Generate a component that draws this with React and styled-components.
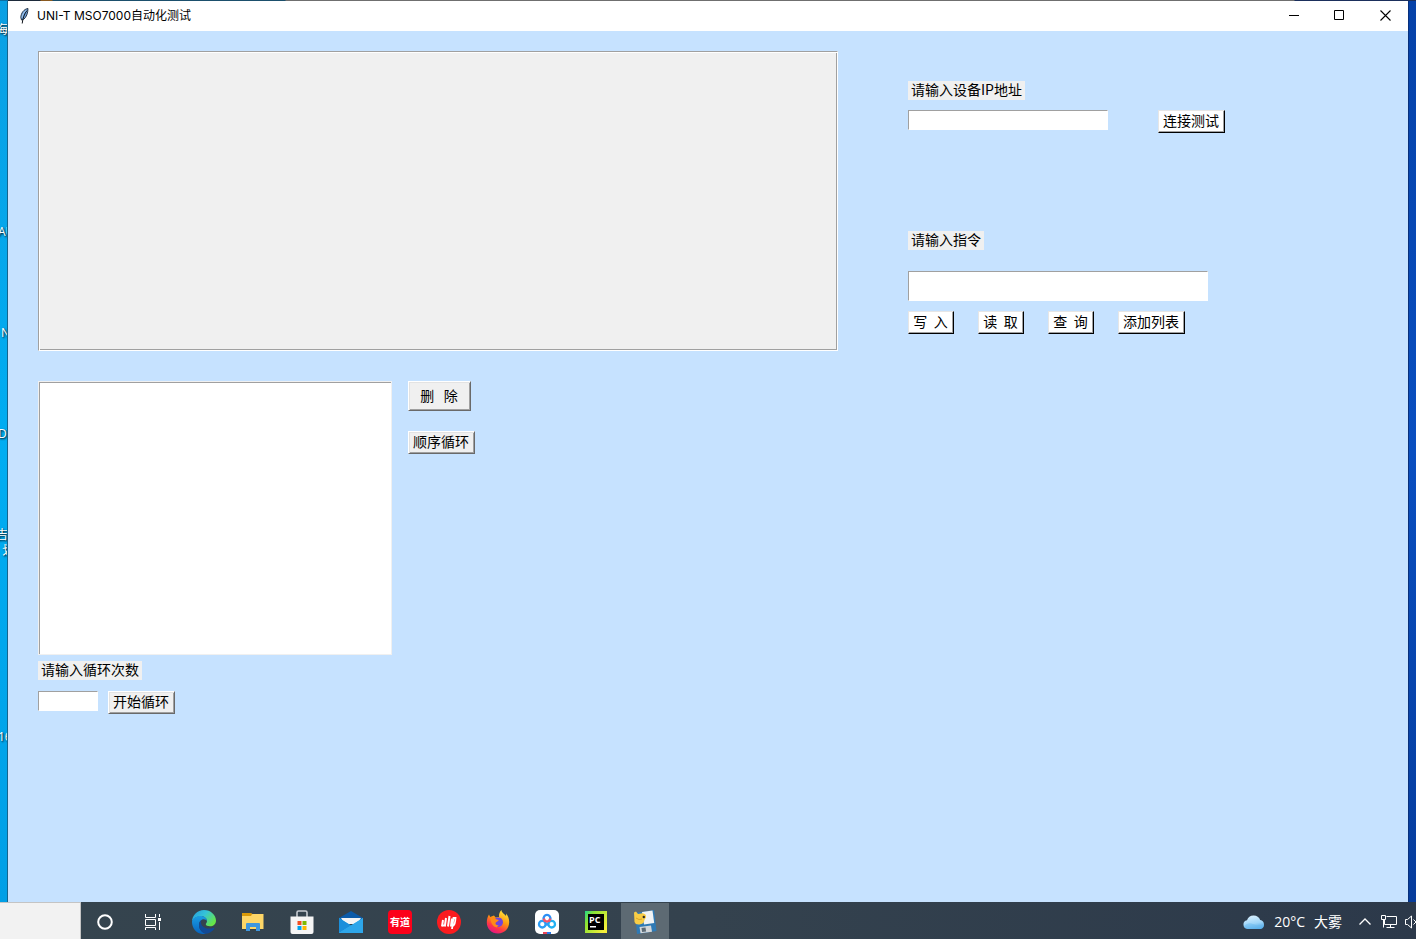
import React from "react";
import styled, { createGlobalStyle, css } from "styled-components";

const GlobalStyle = createGlobalStyle`
  *, *::before, *::after { box-sizing: border-box; }
  body {
    margin: 0;
    font-family: "Noto Sans CJK SC", "Noto Sans", sans-serif;
    font-size: 14px;
    color: #000;
  }
  button, input, select { font: inherit; color: inherit; margin: 0; border-radius: 0; }
  svg { display: block; flex: none; }
`;

/* ---------- desktop ---------- */

const Desktop = styled.div`
  min-height: 100vh;
  display: flex;
  flex-direction: column;
  overflow: hidden;
  background: linear-gradient(90deg, #00a2ea 50%, #0642a8 50%);
`;

const TopEdge = styled.div`
  height: 1px;
  background: linear-gradient(90deg, #0a6fa4 8px, #1d2a3a 8px, #1d2a3a 40px, #8a5a20 41px, #8a5a20 52px, #1b4f6c 53px, #1b4f6c 285px, #6f6f6f 286px, #6f6f6f 1294px, #1b2f5c 1295px);
`;

const Workspace = styled.div`
  flex: 1;
  display: flex;
`;

const IconColumn = styled.ul`
  flex: none;
  width: 8px;
  margin: 0;
  padding: 21px 0 0;
  list-style: none;
  overflow: hidden;
  border-right: 1px solid #17658c;
  background: linear-gradient(#0aa0e4, #00adf2 50%, #009fe6);
`;

const labelStarts = { cut: -4, edge: -2, inset: 1 };

const IconLabel = styled.li`
  height: 101px;
  margin-left: ${(p) => labelStarts[p.$start || "cut"]}px;
  font-family: "Open Sans", "Noto Sans CJK SC", sans-serif;
  font-size: 12px;
  line-height: 16px;
  color: #fff;
  white-space: pre;
  text-shadow: 1px 1px 2px #000;
`;

const RightEdge = styled.div`
  flex: none;
  width: 8px;
  border-left: 1px solid #08307c;
  background: linear-gradient(#0642a8, #0a4fc0 50%, #063c9c);
`;

/* ---------- application window ---------- */

const AppWindow = styled.main`
  flex: 1;
  min-width: 0;
  display: flex;
  flex-direction: column;
  background: #c6e2ff;
`;

const TitleBar = styled.header`
  display: flex;
  align-items: center;
  height: 30px;
  padding-left: 10px;
  background: #fff;
`;

const Title = styled.h1`
  flex: 1;
  margin: 0 0 0 6px;
  font-family: Inter, "Noto Sans CJK SC", sans-serif;
  font-size: 12px;
  font-weight: 400;
  line-height: 16px;
`;

const CaptionButton = styled.button`
  width: 46px;
  height: 30px;
  padding: 0 0 1px;
  border: 0;
  background: transparent;
  display: grid;
  place-items: center;
`;

const Client = styled.div`
  flex: 1;
  display: grid;
  grid-template-columns: minmax(0, 8fr) minmax(0, 5fr);
  column-gap: 70px;
  align-items: start;
  padding: 20px 0 20px 30px;
`;

const Column = styled.div`
  display: flex;
  flex-direction: column;
  align-items: flex-start;
`;

const OutputPanel = styled.output`
  width: 100%;
  height: 300px;
  margin-bottom: 30px;
  border: 1px solid;
  border-color: #a0a0a0 #fff #fff #a0a0a0;
  box-shadow: inset 1px 1px #fff, inset -1px -1px #a0a0a0;
  background: #f0f0f0;
`;

const Row = styled.div`
  display: flex;
  align-items: flex-start;
  gap: ${(p) => p.$gap}px;
`;

const CommandList = styled.select`
  appearance: none;
  width: 354px;
  height: 274px;
  padding: 2px;
  border: 1px solid #f0f0f0;
  box-shadow: inset 1px 1px #a0a0a0;
  background: #fff;
  overflow: hidden;
  outline: 0;
`;

const Stack = styled.div`
  display: flex;
  flex-direction: column;
  align-items: flex-start;
  gap: 20px;
`;

const raisedGrey = css`
  border-color: #fff #696969 #696969 #fff;
  box-shadow: inset 1px 1px #e3e3e3, inset -1px -1px #a0a0a0;
  background: #f0f0f0;
`;

const raisedWhite = css`
  border-color: #e6e6e6 #000 #000 #e6e6e6;
  box-shadow: inset -1px -1px #a0a0a0;
  background: #fff;
`;

const widths = { short: 46, medium: 63, long: 67 };

const PushButton = styled.button`
  width: ${(p) => widths[p.$size || "long"]}px;
  height: ${(p) => (p.$size === "medium" ? 30 : 23)}px;
  padding: 0 1px 3px 0;
  border: 1px solid;
  line-height: 18px;
  white-space: pre;
  ${(p) => (p.$white ? raisedWhite : raisedGrey)}
`;

const FieldLabel = styled.label`
  padding: 0 3px 2px;
  line-height: 17px;
  background: #f0f0f0;
`;

const Entry = styled.input`
  width: ${(p) => p.$width}px;
  height: ${(p) => (p.$tall ? 30 : 20)}px;
  padding: 0 3px;
  border: 1px solid;
  border-color: #a0a0a0 #fff #fff #a0a0a0;
  background: #fff;
  outline: 0;
`;

const LoopGroup = styled.section`
  display: flex;
  flex-direction: column;
  align-items: flex-start;
  gap: 11px;
  margin-top: 6px;
`;

const AddressGroup = styled(LoopGroup)`
  gap: 10px;
  margin-top: 30px;
`;

const CommandGroup = styled(LoopGroup)`
  gap: 10px;
  margin-top: 98px;

  ${FieldLabel} { margin-bottom: 11px; }
`;

/* ---------- taskbar ---------- */

const Taskbar = styled.footer`
  display: flex;
  height: 37px;
  padding-top: 1px;
  background: linear-gradient(90deg, #35444e, #34424e 50%, #2c394a);
`;

const SearchBox = styled.input`
  flex: none;
  width: 81px;
  height: 37px;
  margin: -1px 1px 0 0;
  border: 0;
  border-top: 1px solid #c4c4c4;
  border-right: 1px solid #c4c4c4;
  background: #f2f2f2;
`;

const AppStrip = styled.nav`
  display: flex;
  gap: 1px;
`;

const TaskButton = styled.button`
  width: 48px;
  height: 36px;
  padding: 2px 0 0;
  border: 0;
  display: grid;
  place-items: center;
  background: ${(p) => (p.$active ? "#5d6a73" : "transparent")};
`;

const Tray = styled.div`
  flex: none;
  display: flex;
  align-items: center;
  margin-left: auto;
  padding-top: 2px;
  overflow: hidden;
  color: #fff;
`;

const Weather = styled.button`
  display: flex;
  align-items: center;
  gap: 9px;
  padding: 0;
  margin-right: 17px;
  border: 0;
  background: transparent;
  font-family: "Open Sans", "Noto Sans CJK SC", sans-serif;
  font-size: 14px;
  line-height: 20px;
  color: #fff;
`;

const TrayButton = styled.button`
  padding: 0;
  margin-right: ${(p) => p.$after || 0}px;
  border: 0;
  background: transparent;
  overflow: hidden;
`;

/* ---------- drawings ---------- */

const Feather = () => (
  <svg width="13" height="18" viewBox="0 0 13 18">
    <path d="M10 1.500 C6 2 3 6 2.800 10.500 L3.500 13 L5.500 12.500 C8.300 10.500 10 6 10 1.500Z" fill="#6d9fd8" stroke="#1a2738" strokeWidth=".9" />
    <path d="M9 3.500 C6.500 6.500 4.800 11 4.200 16.500" fill="none" stroke="#10151c" strokeWidth="1" />
    <path d="M8 3.400 C5.800 5.400 4.500 7.500 4 10.500" fill="none" stroke="#b8d7f5" strokeWidth=".8" />
  </svg>
);

const Cortana = () => (
  <svg width="24" height="24" viewBox="0 0 24 24">
    <circle cx="11" cy="12" r="6.8" fill="none" stroke="#fff" strokeWidth="2" />
  </svg>
);

const TaskView = () => (
  <svg width="24" height="24" viewBox="0 0 24 24" fill="none" stroke="#fff" strokeWidth="1">
    <path d="M2.500 4v3.500h10V4M2.500 20v-2.500h10V20M2.500 9.500h10v6h-10zM16.500 4v3M16.500 12v8" />
    <path d="M15 8h3v3h-3z" fill="#fff" stroke="none" />
  </svg>
);

const Edge = () => (
  <svg width="24" height="24" viewBox="0 0 24 24">
    <defs>
      <linearGradient id="edgeTop" x1="0" y1="0" x2="1" y2=".6">
        <stop offset="0" stopColor="#2499dc" /><stop offset=".5" stopColor="#35c3d8" /><stop offset="1" stopColor="#67e647" />
      </linearGradient>
      <linearGradient id="edgeSide" x1="0" y1="0" x2="0" y2="1">
        <stop offset="0" stopColor="#1b9de2" /><stop offset="1" stopColor="#0763bf" />
      </linearGradient>
    </defs>
    <path d="M0 12C0 5 5.400 0 12 0s12 5 12 10.500c0 3.700-2.700 5.800-6 5.800-2.600 0-4.200-1-4.200-2 0-.7 1.200-1.300 1.200-3.200C15 8.300 12.500 6.200 9 6.200 4.500 6.200 0 9 0 12Z" fill="url(#edgeTop)" />
    <path d="M0 12c0-3.500 4.200-6 8.500-6 3.700 0 6.500 2.200 6.500 5-.6-1.100-1.800-1.800-3.200-1.800-2.800 0-4.800 2.500-4.800 5.700 0 4.600 3.300 7.600 7 8.900C6 25.500 0 19 0 12Z" fill="url(#edgeSide)" />
    <path d="M9.600 10C8 11 7 12.900 7 14.900c0 4.600 3.300 8 7 8.900 3.600-.6 6.500-2.600 8.400-5.400.3-.5-.1-.9-.6-.7C15.500 20.300 9 17 9 12.500c0-1 .2-1.800.6-2.500Z" fill="#124a96" />
  </svg>
);

const Explorer = () => (
  <svg width="24" height="24" viewBox="0 0 24 24">
    <path d="M1 3h9l1.500 1H22v15H1z" fill="#e7a11a" />
    <path d="M1 6h9l1.500-2H22.500v15H1z" fill="#fdd667" />
    <path d="M1 3h9v3H1z" fill="#d99a09" />
    <path d="M5 14q0-1 1-1h12q1 0 1 1v7h-4v-4H9v4H5z" fill="#3f97de" />
  </svg>
);

const Store = () => (
  <svg width="24" height="26" viewBox="0 0 24 26">
    <path d="M7 9V3.500Q7 2 8.500 2h7Q17 2 17 3.500V9" fill="none" stroke="#c6cbd2" strokeWidth="1.600" />
    <path d="M.5 7.500h23V23Q23.500 25 21.500 25h-19Q.5 25 .5 23z" fill="#f5f5f5" />
    <path d="M7.500 12h4v4h-4z" fill="#f25022" /><path d="M12.500 12h4v4h-4z" fill="#7fba00" />
    <path d="M7.500 17h4v4h-4z" fill="#00a4ef" /><path d="M12.500 17h4v4h-4z" fill="#ffb900" />
  </svg>
);

const Mail = () => (
  <svg width="24" height="24" viewBox="0 0 24 24">
    <path d="M0 8 12 1l12 7v3H0z" fill="#0d5ba8" />
    <path d="M2 8h20l-4 6H6z" fill="#f4f4f4" />
    <path d="M0 8l12 7.500L24 8v15H0z" fill="#38b5ef" />
    <path d="M0 23 12 15.500 0 8z" fill="#1b8fdb" />
    <path d="M0 23 24 8v15z" fill="#2da6ea" />
  </svg>
);

const Youdao = () => (
  <svg width="24" height="24" viewBox="0 0 24 24">
    <rect width="24" height="24" rx="4" fill="#fc011a" />
    <text x="12" y="15.500" textAnchor="middle" fontSize="10" fontWeight="700" fill="#fff">有道</text>
  </svg>
);

const RedDisc = () => (
  <svg width="24" height="24" viewBox="0 0 24 24">
    <circle cx="12" cy="12" r="12" fill="#fb1c1f" />
    <g fill="none" stroke="#fff" strokeWidth="2">
      <path d="M6 10 5 16.500M9 8 7.800 16.500M12.500 6l-1.500 10.500M4.500 15.600h4" />
      <path d="M14.800 8.500 14 15.500h2.500q1.600-.8 2-7.500h-2L15 19" strokeWidth="1.800" />
    </g>
  </svg>
);

const Firefox = () => (
  <svg width="24" height="24" viewBox="0 0 24 24">
    <defs>
      <linearGradient id="fox" x1=".8" y1="0" x2=".3" y2="1">
        <stop offset="0" stopColor="#fff044" /><stop offset=".45" stopColor="#ff980e" /><stop offset=".75" stopColor="#ff3647" /><stop offset="1" stopColor="#e31587" />
      </linearGradient>
    </defs>
    <path d="M3 4.500 4.200 7 8 5.500l1.500 2L13 7c-.3-3 .8-5.500 2.500-7 0 3 3 3.700 4.500 6 .3-1 .1-1.700 0-2.500 2 2 3.200 5.200 3.200 8.500C23.200 18.500 18.500 23.500 12 23.500S.8 18.700.8 12.500C.8 9.500 1.500 6.500 3 4.500Z" fill="url(#fox)" />
    <circle cx="12.200" cy="12.200" r="4.800" fill="#6f45dc" />
    <path d="M4.200 7 9 6.700l.5 2.300 3.200 1c-.2 1.500-2.700 1.600-3.200 3-.3 1.500 1.400 2.500 3.200 2l-2 2.400C7 17 4.500 13 4.200 7Z" fill="#ff8a16" />
  </svg>
);

const Netdisk = () => (
  <svg width="24" height="24" viewBox="0 0 24 24">
    <rect width="24" height="24" rx="5" fill="#fff" />
    <g fill="none" strokeWidth="2.300">
      <circle cx="7.300" cy="14.200" r="3.300" stroke="#2c9df5" />
      <circle cx="16.700" cy="14.200" r="3.300" stroke="#22b1f2" />
      <path d="M8.800 9.500a3.400 3.400 0 1 1 6.400 0" stroke="#2c8ff5" />
      <path d="M8.800 8.500q.4 3 3.200 3.200 2.800-.2 3.200-3.200" stroke="#f4546c" />
      <path d="M10 12.500l4 3.500M14 12.500 10 16" stroke="#2c9df5" strokeWidth="1.500" />
    </g>
    <path d="M8 22h4v2H8z" fill="#e84357" /><path d="M12 22h4v2h-4z" fill="#2878e8" />
  </svg>
);

const PyCharm = () => (
  <svg width="22" height="22" viewBox="0 0 22 22">
    <defs>
      <linearGradient id="pc" x1="0" y1="0" x2="1" y2=".7">
        <stop offset="0" stopColor="#21d789" /><stop offset=".3" stopColor="#8be334" /><stop offset="1" stopColor="#f5ee39" />
      </linearGradient>
    </defs>
    <path d="M0 0h22v22H0z" fill="url(#pc)" />
    <path d="M3 3h16v16H3z" />
    <text x="4" y="11.500" fontFamily="Open Sans, sans-serif" fontSize="9" fontWeight="700" fill="#fff">PC</text>
    <path d="M5 15h6v1.500H5z" fill="#fff" />
  </svg>
);

const PythonDisk = () => (
  <svg width="24" height="24" viewBox="0 0 24 24">
    <path d="M2 3 21 0l2.500 21L4 24z" fill="#2f7ab5" />
    <path d="M9 2 19.500.500 21.200 13 11 14.500z" fill="#f1f3f4" />
    <path d="M6.500 17 18 15.500l1 6.300L7.500 23.300z" fill="#d3d7da" />
    <path d="M8.500 18l4-.5.6 4-4 .6z" fill="#5d6b76" />
    <path d="M1 2.500 3 1.500 5 4l4.500-.8q4 .3 3.500 4.300l-1.500 2.300q-.5 4-4 4.500-5 1-6-2.300z" fill="#f9cd45" />
    <path d="M3 8q3 2.500 6 1" fill="none" stroke="#dba52a" strokeWidth="1" />
    <circle cx="10.800" cy="7" r="1.200" fill="#2a2a2a" />
  </svg>
);

const Cloud = () => (
  <svg width="22" height="16" viewBox="0 0 22 16">
    <defs>
      <linearGradient id="cloud" x1=".3" y1="0" x2=".6" y2="1">
        <stop offset="0" stopColor="#d9f0ff" /><stop offset=".6" stopColor="#9ed5f8" /><stop offset="1" stopColor="#4aa3e4" />
      </linearGradient>
    </defs>
    <path d="M4.500 15A4.400 4.400 0 0 1 4 6.300 7 7 0 0 1 17.200 6 4.600 4.600 0 0 1 17.500 15Z" fill="url(#cloud)" />
    <path d="M1 12q4-4 9-2 4 2 11 1-1 4-4 4H5q-3 0-4-3Z" fill="#70bdf0" opacity=".55" />
  </svg>
);

const Chevron = () => (
  <svg width="12" height="16" viewBox="0 0 12 16">
    <path d="M.5 10.500 6 5l5.500 5.500" fill="none" stroke="#fff" strokeWidth="1.300" />
  </svg>
);

const Network = () => (
  <svg width="16" height="16" viewBox="0 0 16 16" fill="none" stroke="#fff">
    <path d="M5.500 2.500h10v8H3.500V6M.5 1.500h4v4h-4zM2.500 5.500v8M9.500 10.500v3M5.500 13.500h8" />
  </svg>
);

const Speaker = () => (
  <svg width="11" height="16" viewBox="0 0 11 16" fill="none" stroke="#fff">
    <path d="M.5 5.500h2L6.500 2v12L2.500 10.500h-2zM8.500 5.500l5 5M8.500 10.500l5-5" />
  </svg>
);

const desktopLabels = [
  { text: "海" },
  { text: "" },
  { text: "AU", start: "edge" },
  { text: "N", start: "inset" },
  { text: "DT", start: "edge" },
  { text: "吉\n  划" },
  { text: "" },
  { text: "16", start: "edge" },
];

const apps = [
  ["Cortana", Cortana],
  ["任务视图", TaskView],
  ["Edge", Edge],
  ["文件资源管理器", Explorer],
  ["Store", Store],
  ["邮件", Mail],
  ["有道", Youdao],
  ["应用", RedDisc],
  ["Firefox", Firefox],
  ["网盘", Netdisk],
  ["PyCharm", PyCharm],
  ["Python", PythonDisk],
];

export default function App() {
  return (
    <Desktop>
      <GlobalStyle />
      <TopEdge />
      <Workspace>
        <IconColumn>
          {desktopLabels.map((item, i) => (
            <IconLabel key={i} $start={item.start}>{item.text}</IconLabel>
          ))}
        </IconColumn>

        <AppWindow>
          <TitleBar>
            <Feather />
            <Title>UNI-T MSO7000自动化测试</Title>
            <CaptionButton aria-label="最小化">
              <svg width="11" height="11" viewBox="0 0 11 11"><path d="M1 5h10v1H1z" /></svg>
            </CaptionButton>
            <CaptionButton aria-label="最大化">
              <svg width="11" height="11" viewBox="0 0 11 11"><path d="M.5 .5h9v9h-9z" fill="none" stroke="#000" /></svg>
            </CaptionButton>
            <CaptionButton aria-label="关闭">
              <svg width="11" height="11" viewBox="0 0 11 11"><path d="M.5 .5l10 10M10.500 .5l-10 10" stroke="#000" strokeWidth="1.100" /></svg>
            </CaptionButton>
          </TitleBar>

          <Client>
            <Column>
              <OutputPanel aria-label="输出" />
              <Row $gap={16}>
                <CommandList multiple aria-label="指令列表" />
                <Stack>
                  <PushButton $size="medium">{"删   除"}</PushButton>
                  <PushButton>顺序循环</PushButton>
                </Stack>
              </Row>
              <LoopGroup>
                <FieldLabel htmlFor="loops">请输入循环次数</FieldLabel>
                <Row $gap={10}>
                  <Entry id="loops" $width={60} />
                  <PushButton>开始循环</PushButton>
                </Row>
              </LoopGroup>
            </Column>

            <Column>
              <AddressGroup>
                <FieldLabel htmlFor="address">请输入设备IP地址</FieldLabel>
                <Row $gap={50}>
                  <Entry id="address" $width={200} />
                  <PushButton $white>连接测试</PushButton>
                </Row>
              </AddressGroup>
              <CommandGroup>
                <FieldLabel htmlFor="command">请输入指令</FieldLabel>
                <Entry id="command" $width={300} $tall />
                <Row $gap={24}>
                  <PushButton $white $size="short">{"写  入"}</PushButton>
                  <PushButton $white $size="short">{"读  取"}</PushButton>
                  <PushButton $white $size="short">{"查  询"}</PushButton>
                  <PushButton $white>添加列表</PushButton>
                </Row>
              </CommandGroup>
            </Column>
          </Client>
        </AppWindow>
        <RightEdge />
      </Workspace>

      <Taskbar>
        <SearchBox aria-label="搜索" />
        <AppStrip>
          {apps.map(([name, Icon]) => (
            <TaskButton key={name} aria-label={name} $active={name === "Python"}>
              <Icon />
            </TaskButton>
          ))}
        </AppStrip>
        <Tray>
          <Weather>
            <Cloud />
            <span>20°C</span>
            <span>大雾</span>
          </Weather>
          <TrayButton $after={10} aria-label="显示隐藏的图标"><Chevron /></TrayButton>
          <TrayButton $after={8} aria-label="网络"><Network /></TrayButton>
          <TrayButton aria-label="音量"><Speaker /></TrayButton>
        </Tray>
      </Taskbar>
    </Desktop>
  );
}
